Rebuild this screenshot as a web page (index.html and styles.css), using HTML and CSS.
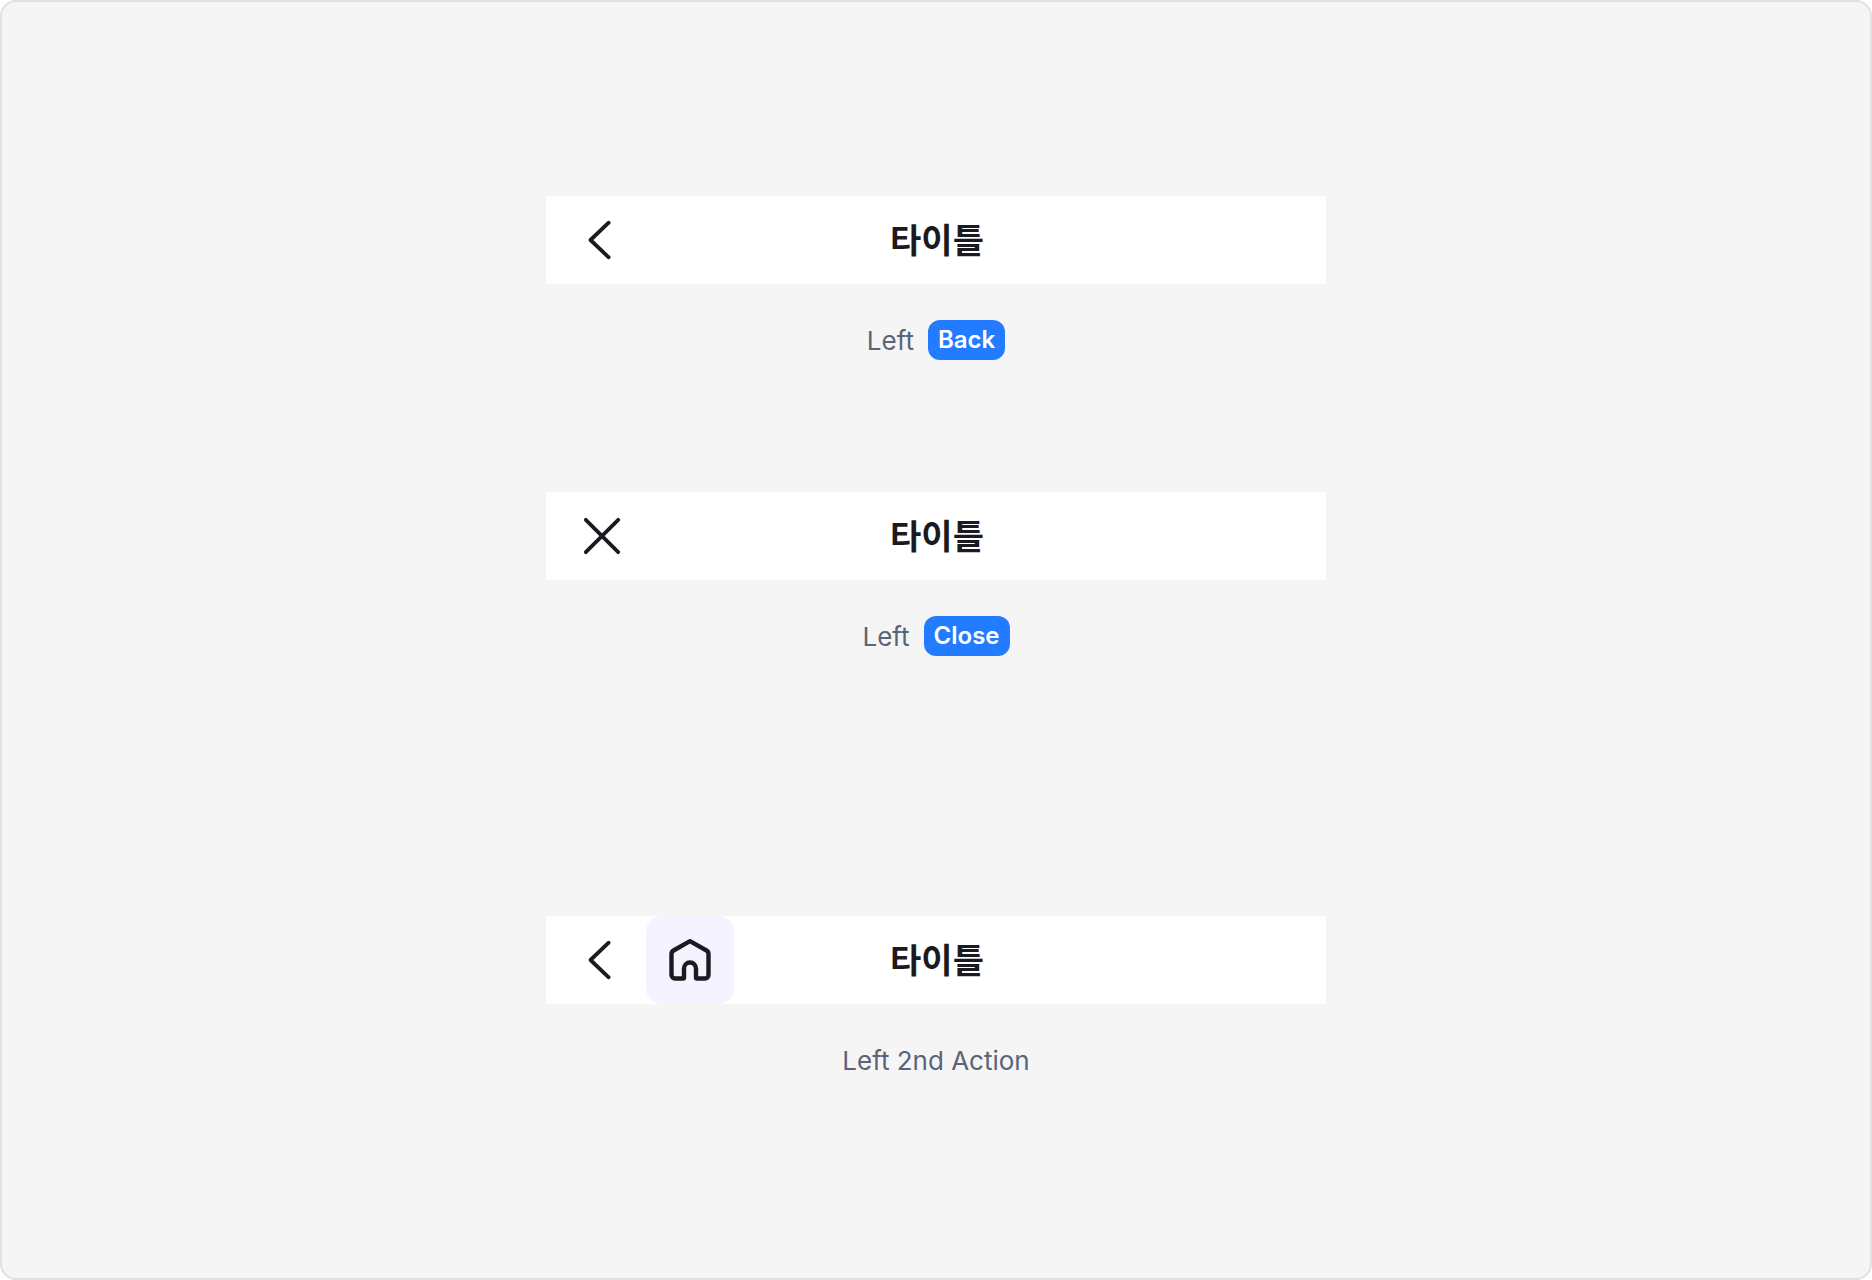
FILE: index.html
```html
<!DOCTYPE html>
<html lang="ko">
<head>
<meta charset="utf-8">
<title>Top bar</title>
<link rel="stylesheet" href="styles.css">
</head>
<body>
<main class="frame">
  <section class="group group-back">
    <div class="bar">
      <div class="left">
        <span class="action"><svg class="icon" viewBox="0 0 88 88"><path class="stroke" d="M50.700 26.700 32.500 44l18.200 17.300"/></svg></span>
      </div>
      <h2 class="title">타이틀</h2>
    </div>
    <p class="caption">Left <span class="badge">Back</span></p>
  </section>
  <section class="group group-close">
    <div class="bar">
      <div class="left">
        <span class="action"><svg class="icon" viewBox="0 0 88 88"><path class="stroke" d="M27.800 27.800 60.200 60.200M60.200 27.800 27.800 60.200"/></svg></span>
      </div>
      <h2 class="title">타이틀</h2>
    </div>
    <p class="caption">Left <span class="badge">Close</span></p>
  </section>
  <section class="group group-home">
    <div class="bar">
      <div class="left">
        <span class="action"><svg class="icon" viewBox="0 0 88 88"><path class="stroke" d="M50.700 26.700 32.500 44l18.200 17.300"/></svg></span>
        <span class="action action-active"><svg class="icon" viewBox="0 0 88 88"><path class="stroke thick" d="M44 25.200 60.500 34.500a4 4 0 0 1 2 3.500V59a3.500 3.500 0 0 1-3.500 3.500H51a1 1 0 0 1-1-1V52.500a6 6 0 0 0-12 0V61.500a1 1 0 0 1-1 1H29a3.500 3.500 0 0 1-3.500-3.500V38a4 4 0 0 1 2-3.500Z"/></svg></span>
      </div>
      <h2 class="title">타이틀</h2>
    </div>
    <p class="caption">Left 2nd Action</p>
  </section>
</main>
</body>
</html>
```
FILE: styles.css
```css
* { box-sizing: border-box; }
html, body { margin: 0; padding: 0; }
body { width: 1872px; height: 1280px; font-family: Inter, "Noto Sans CJK KR", sans-serif; font-optical-sizing: none; }
.frame {
  width: 1872px;
  height: 1280px;
  background: #f5f5f5;
  border: 2px solid #e0e0e0;
  border-radius: 16px;
  padding-top: 194px;
  display: flex;
  flex-direction: column;
  align-items: center;
}
.group { width: 780px; display: flex; flex-direction: column; align-items: center; }
.group-close { margin-top: 132px; }
.group-home { margin-top: 260px; }
.bar {
  position: relative;
  width: 100%;
  height: 88px;
  background: #fff;
  display: flex;
  align-items: center;
  justify-content: center;
}
.left { position: absolute; left: 12px; top: 0; display: flex; }
.action { width: 88px; height: 88px; display: block; border-radius: 16px; }
.action-active { background: #f5f3ff; }
.icon { width: 88px; height: 88px; display: block; }
.stroke { fill: none; stroke: #1a1a1f; stroke-width: 3.800; stroke-linecap: round; stroke-linejoin: round; }
.thick { stroke-width: 4.400; }
.title {
  margin: 0 0 2px 2px;
  font: 700 34px/44px "Noto Sans CJK KR", sans-serif;
  color: #1a1a1f;
}
.caption {
  margin: 36px 0 0;
  height: 40px;
  display: flex;
  align-items: center;
  gap: 14px;
  font-size: 26px;
  color: #5a6478;
}
.badge {
  height: 40px;
  padding: 0 10px;
  border-radius: 12px;
  background: #237bff;
  color: #fff;
  font-size: 24px;
  font-weight: 600;
  line-height: 40px;
}
```
